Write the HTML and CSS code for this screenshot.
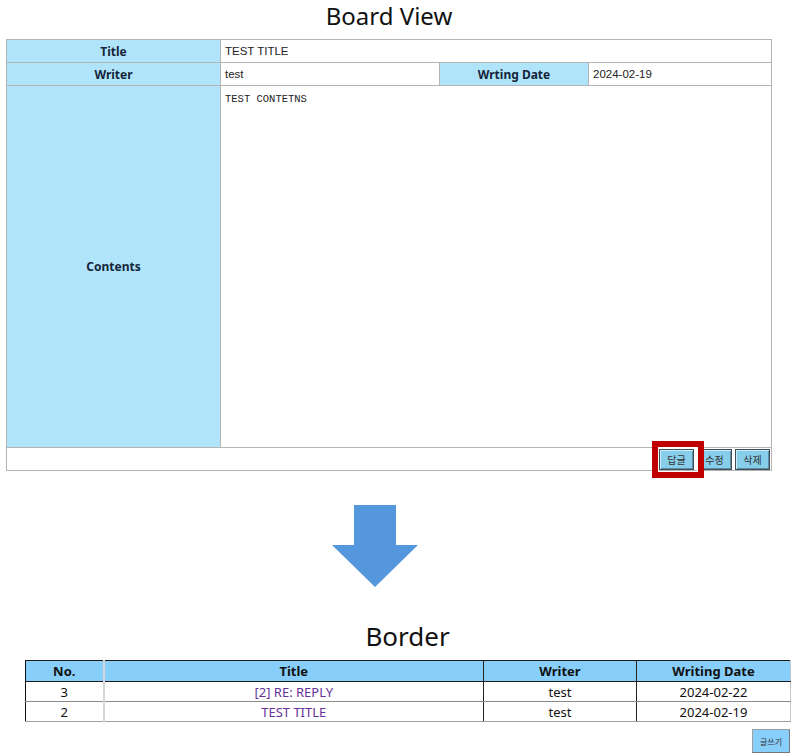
FILE: index.html
```html
<!DOCTYPE html>
<html lang="ko">
<head>
<meta charset="utf-8">
<title>Board View</title>
<link rel="stylesheet" href="styles.css">
</head>
<body>
<section class="board-view">
  <h1 class="page-title">Board View</h1>
  <table class="view-table">
    <colgroup>
      <col class="c-label"><col class="c-writer"><col class="c-date-label"><col>
    </colgroup>
    <tr class="row-line">
      <th>Title</th>
      <td colspan="3">TEST TITLE</td>
    </tr>
    <tr class="row-line">
      <th>Writer</th>
      <td>test</td>
      <th>Wrting Date</th>
      <td>2024-02-19</td>
    </tr>
    <tr class="row-contents">
      <th>Contents</th>
      <td colspan="3" class="contents">TEST CONTETNS</td>
    </tr>
    <tr class="row-actions">
      <td colspan="4" class="actions">
        <span class="highlight"><button class="btn">답글</button></span><button class="btn">수정</button><button class="btn">삭제</button>
      </td>
    </tr>
  </table>
</section>

<div class="arrow-wrap">
  <svg class="arrow" width="86" height="82" viewBox="0 0 86 82">
    <polygon points="22,0 64,0 64,40 86,40 43,82 0,40 22,40" fill="#5597dc"/>
  </svg>
</div>

<section class="board-list">
  <h2 class="list-title">Border</h2>
  <table class="list-table">
    <colgroup>
      <col class="l-no"><col class="l-title"><col class="l-writer"><col class="l-date">
    </colgroup>
    <thead>
      <tr>
        <th class="col-no">No.</th>
        <th class="col-title">Title</th>
        <th class="col-writer">Writer</th>
        <th class="col-date">Writing Date</th>
      </tr>
    </thead>
    <tbody>
      <tr>
        <td class="col-no">3</td>
        <td class="col-title"><a class="title-link">[2] RE: REPLY</a></td>
        <td class="col-writer">test</td>
        <td class="col-date">2024-02-22</td>
      </tr>
      <tr>
        <td class="col-no">2</td>
        <td class="col-title"><a class="title-link">TEST TITLE</a></td>
        <td class="col-writer">test</td>
        <td class="col-date">2024-02-19</td>
      </tr>
    </tbody>
  </table>
  <div class="list-actions">
    <button class="btn-write">글쓰기</button>
  </div>
</section>
</body>
</html>
```
FILE: styles.css
```css
*, *::before, *::after { box-sizing: border-box; }

body {
  margin: 0;
  background: #fff;
  font-family: "Noto Sans", "Noto Sans CJK KR", sans-serif;
  color: #111;
}

.board-view {
  margin-left: 6px;
  width: 766px;
}

.page-title {
  margin: 0;
  height: 39px;
  line-height: 31px;
  font-size: 24px;
  font-weight: 400;
  text-align: center;
  color: #111;
}

.view-table {
  width: 766px;
  border-collapse: collapse;
  table-layout: fixed;
  border: 1px solid #a9a9a9;
}

.c-label { width: 214px; }
.c-writer { width: 219px; }
.c-date-label { width: 149px; }

.view-table th,
.view-table td {
  border: 1px solid #b4b4b4;
  padding: 0;
}

.view-table th {
  background: #afe4fa;
  font-family: "Noto Sans", "Noto Sans CJK KR", sans-serif;
  font-size: 12px;
  font-weight: 700;
  color: #15253a;
  text-align: center;
}

.view-table td {
  font-family: "Liberation Sans", "Noto Sans CJK KR", sans-serif;
  font-size: 11.5px;
  color: #222;
  padding-left: 4px;
}

.row-line th,
.row-line td { height: 23px; }

.row-contents th,
.row-contents td { height: 362px; }

.view-table .contents {
  vertical-align: top;
  padding-top: 7px;
  font-family: "Liberation Mono", "Noto Sans CJK KR", monospace;
  font-size: 10.5px;
  line-height: 12px;
  color: #222;
}

.row-actions td { height: 23px; }

.view-table .actions {
  text-align: right;
  padding: 0 1px 0 0;
  font-size: 0;
  vertical-align: middle;
}

.btn {
  width: 35px;
  height: 21px;
  margin-left: 3px;
  padding: 0;
  background: #87ceeb;
  border: 1px solid #3e4d58;
  box-shadow: inset 1px 1px 0 #c9ebf7, inset -1px -1px 0 #5d8ea3;
  font-family: "Noto Sans CJK KR", sans-serif;
  font-size: 10px;
  color: #333;
  vertical-align: middle;
}

.highlight {
  position: relative;
  display: inline-block;
  vertical-align: middle;
  font-size: 0;
}

.highlight .btn { margin-left: 0; }

.highlight::after {
  content: "";
  position: absolute;
  left: -7px;
  top: -8px;
  width: 52px;
  bottom: -8px;
  border: 6px solid #c00000;
  box-shadow: inset 0 0 0 1px #fff;
}

.arrow-wrap {
  margin-top: 34px;
  padding-left: 332px;
  height: 82px;
}

.arrow { display: block; }

.board-list {
  margin-left: 25px;
  width: 765px;
}

.list-title {
  margin: 36px 0 10px;
  height: 27px;
  line-height: 27px;
  font-size: 26px;
  font-weight: 400;
  text-align: center;
  color: #111;
}

.list-table {
  width: 765px;
  border-collapse: collapse;
  table-layout: fixed;
  font-family: "Noto Sans", "Noto Sans CJK KR", sans-serif;
  font-size: 13px;
}

.l-no { width: 78px; }
.l-title { width: 380px; }
.l-writer { width: 153px; }
.l-date { width: 154px; }

.list-table th,
.list-table td {
  padding: 0;
  text-align: center;
  color: #111;
}

.list-table th {
  height: 21px;
  background: #87cefa;
  font-weight: 700;
  border-top: 1px solid #1a1a1a;
  border-bottom: 1px solid #1a1a1a;
  line-height: 19px;
}

.list-table td {
  height: 20px;
  line-height: 18px;
  border-bottom: 1px solid #8a8a8a;
}

.list-table tbody tr:last-child td { border-bottom-color: #a0a0a0; }

.list-table .col-no {
  border-left: 1px solid #111;
  border-right: 2px solid #d6d6d6;
}

.list-table .col-writer {
  border-left: 1px solid #222;
  border-right: 1px solid #222;
}

.list-table .col-date { border-right: 1px solid #c8c8c8; }

.title-link {
  color: #663399;
  text-decoration: none;
}

.list-actions {
  display: flex;
  justify-content: flex-end;
  margin-top: 7px;
}

.btn-write {
  width: 38px;
  height: 24px;
  padding: 0;
  background: #87cefa;
  border: 1px solid #a0a0a0;
  border-right-color: #777;
  border-bottom-color: #777;
  font-family: "Noto Sans CJK KR", sans-serif;
  font-size: 8px;
  color: #333;
}
```
